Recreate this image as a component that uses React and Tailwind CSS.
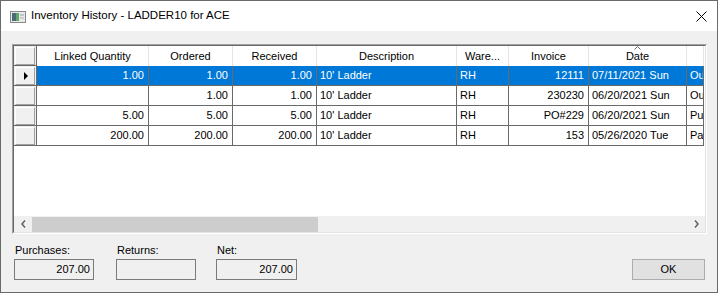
import React from "react";

const cols = [
  { label: "Linked Quantity", w: "w-[112px]", align: "text-right" },
  { label: "Ordered", w: "w-[84px]", align: "text-right" },
  { label: "Received", w: "w-[84px]", align: "text-right" },
  { label: "Description", w: "w-[140px]", align: "text-left" },
  { label: "Ware...", w: "w-[52px]", align: "text-left" },
  { label: "Invoice", w: "w-[80px]", align: "text-right" },
  { label: "Date", w: "w-[98px]", align: "text-left", sorted: true },
  { label: "", w: "w-[17px]", align: "text-left" },
];

const rows = [
  ["1.00", "1.00", "1.00", "10' Ladder", "RH", "12111", "07/11/2021 Sun", "Ou"],
  ["", "1.00", "1.00", "10' Ladder", "RH", "230230", "06/20/2021 Sun", "Ou"],
  ["5.00", "5.00", "5.00", "10' Ladder", "RH", "PO#229", "06/20/2021 Sun", "Pu"],
  ["200.00", "200.00", "200.00", "10' Ladder", "RH", "153", "05/26/2020 Tue", "Pa"],
];

function RowHeader({ current }) {
  return (
    <div className="w-[23px] h-full shrink-0 border-r border-b border-[#696969] bg-[#f0f0f0] flex items-center justify-center">
      <div className="w-[20px] h-[18px] border-t border-l border-white border-r border-b border-r-[#a0a0a0] border-b-[#a0a0a0] flex items-center justify-center">
        {current && (
          <svg width="5" height="8" viewBox="0 0 5 8" className="ml-[2px]">
            <path d="M0 0 L4 4 L0 8 Z" fill="#000" />
          </svg>
        )}
      </div>
    </div>
  );
}

export default function App() {
  return (
    <div
      className="w-[718px] h-[293px] border border-[#6a6a6a] bg-[#f0f0f0] flex flex-col overflow-hidden text-black"
      style={{ fontFamily: '"Liberation Sans", Arial, sans-serif' }}
    >
      {/* Title bar */}
      <div className="h-[30px] shrink-0 bg-white flex items-center pl-[9px] pr-[9px]">
        <svg width="16" height="12" viewBox="0 0 16 12" className="mt-[1px]">
          <rect x="0.5" y="0.5" width="15" height="11" fill="#e8e8e8" stroke="#8a8a8a" />
          <rect x="2" y="2" width="4" height="8" fill="#4a6a78" />
          <rect x="6" y="2" width="3" height="8" fill="#5fa86a" />
          <rect x="10" y="3" width="4" height="2" fill="#b8c8d0" />
          <rect x="10" y="6" width="4" height="2" fill="#c8d0d4" />
        </svg>
        <span className="ml-[5px] text-[11.5px] leading-none">Inventory History - LADDER10 for ACE</span>
        <svg width="11" height="11" viewBox="0 0 11 11" className="ml-auto mr-[1px]">
          <path d="M0.5 0.5 L10.5 10.5 M10.5 0.5 L0.5 10.5" stroke="#000" strokeWidth="1" />
        </svg>
      </div>

      {/* Body */}
      <div className="flex-1 flex flex-col pl-[11px] pr-[11px] pt-[13px]">
        {/* Grid */}
        <div className="w-[695px] h-[190px] border border-[#a0a0a0] border-r-white border-b-white">
          <div className="w-full h-full border border-[#696969] border-r-[#e3e3e3] border-b-[#e3e3e3] bg-white flex flex-col text-[11px] overflow-hidden">
            {/* Header */}
            <div className="h-[20px] shrink-0 flex">
              <div className="w-[23px] h-full shrink-0 border-r border-b border-[#696969] bg-[#f0f0f0] flex items-center justify-center">
                <div className="w-[20px] h-[18px] border-t border-l border-white border-r border-b border-r-[#a0a0a0] border-b-[#a0a0a0]" />
              </div>
              {cols.map((c, i) => (
                <div
                  key={i}
                  className={`${c.w} shrink-0 h-full relative border-r border-[#e5e5e5] bg-white flex items-center justify-center pt-[1px] whitespace-nowrap overflow-hidden`}
                >
                  {c.sorted && (
                    <svg width="7" height="4" viewBox="0 0 7 4" className="absolute top-0 left-[45px]">
                      <path d="M0.5 3.5 L3.5 0.5 L6.5 3.5" stroke="#6a6a6a" fill="none" />
                    </svg>
                  )}
                  {c.label}
                </div>
              ))}
            </div>

            {/* Rows */}
            {rows.map((r, ri) => {
              const sel = ri === 0;
              return (
                <div key={ri} className="h-[20px] shrink-0 flex">
                  <RowHeader current={sel} />
                  {r.map((v, ci) => (
                    <div
                      key={ci}
                      className={`${cols[ci].w} ${cols[ci].align} shrink-0 h-full border-r border-b border-[#696969] px-[3px] pr-[4px] leading-[19px] whitespace-nowrap overflow-hidden ${
                        sel ? "bg-[#0078d7] text-white" : "bg-white"
                      }`}
                    >
                      {v}
                    </div>
                  ))}
                </div>
              );
            })}

            <div className="flex-1 bg-white" />

            {/* Horizontal scrollbar */}
            <div className="h-[16px] shrink-0 bg-[#f0f0f0] flex items-center">
              <div className="w-[18px] h-full flex items-center justify-center">
                <svg width="5" height="8" viewBox="0 0 5 8">
                  <path d="M4 0.5 L1 4 L4 7.5" stroke="#606060" strokeWidth="1.5" fill="none" />
                </svg>
              </div>
              <div className="w-[286px] h-[15px] bg-[#cdcdcd]" />
              <div className="flex-1" />
              <div className="w-[18px] h-full flex items-center justify-center">
                <svg width="5" height="8" viewBox="0 0 5 8">
                  <path d="M1 0.5 L4 4 L1 7.5" stroke="#606060" strokeWidth="1.5" fill="none" />
                </svg>
              </div>
            </div>
          </div>
        </div>

        {/* Totals */}
        <div className="flex items-end mt-[10px] text-[11px]">
          <div className="flex flex-col ml-[2px]">
            <span className="leading-[13px] ml-[1px]">Purchases:</span>
            <div className="mt-[2px] w-[80px] h-[21px] border border-[#7a7a7a] bg-[#f0f0f0] text-right pr-[3px] leading-[19px]">207.00</div>
          </div>
          <div className="flex flex-col ml-[22px]">
            <span className="leading-[13px] ml-[1px]">Returns:</span>
            <div className="mt-[2px] w-[80px] h-[21px] border border-[#7a7a7a] bg-[#f0f0f0]" />
          </div>
          <div className="flex flex-col ml-[20px]">
            <span className="leading-[13px] ml-[1px]">Net:</span>
            <div className="mt-[2px] w-[81px] h-[21px] border border-[#7a7a7a] bg-[#f0f0f0] text-right pr-[3px] leading-[19px]">207.00</div>
          </div>
          <button className="ml-auto mr-[1px] w-[73px] h-[21px] border border-[#adadad] bg-[#e1e1e1] text-[11px] leading-[19px]">
            OK
          </button>
        </div>
      </div>
    </div>
  );
}
